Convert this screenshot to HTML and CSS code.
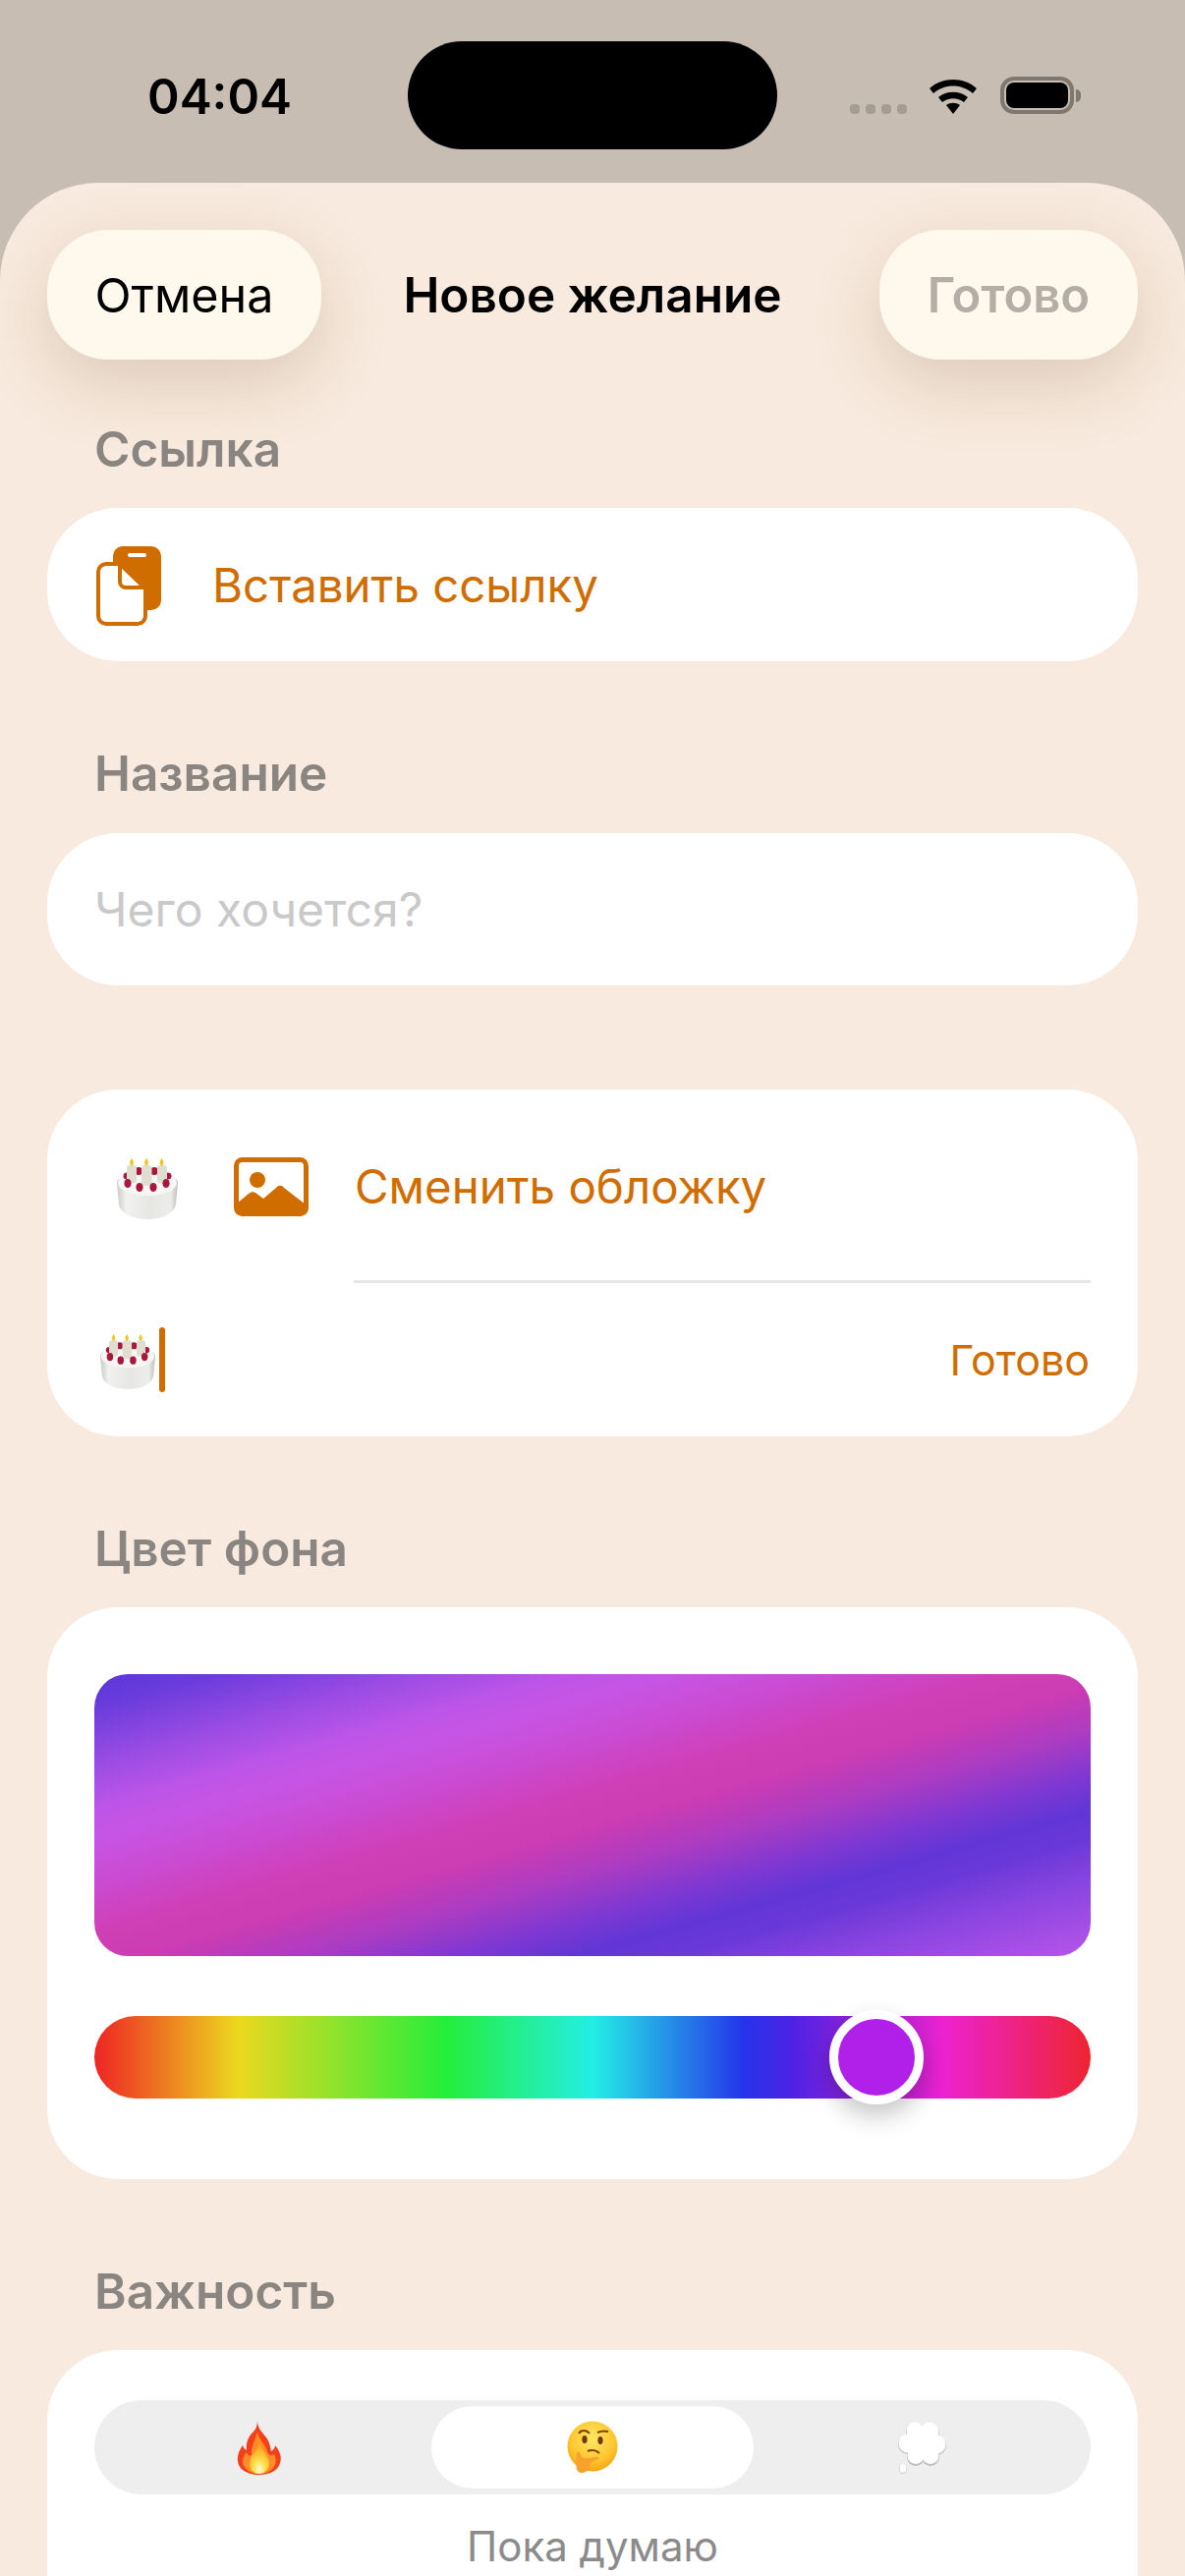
FILE: index.html
```html
<!DOCTYPE html>
<html lang="ru">
<head>
    <meta charset="UTF-8">
    <meta name="viewport" content="width=device-width, initial-scale=1.0">
    <title>Новое желание</title>
    <link rel="stylesheet" href="styles.css">
</head>
<body>
    <svg class="defs" width="0" height="0">
        <defs>
            <linearGradient id="cakeSide" x1="0" y1="0" x2="1" y2="0">
                <stop offset="0" stop-color="#c9c9c6"/>
                <stop offset="0.15" stop-color="#f1f1ef"/>
                <stop offset="0.55" stop-color="#e6e6e3"/>
                <stop offset="0.88" stop-color="#ededeb"/>
                <stop offset="1" stop-color="#bdbdba"/>
            </linearGradient>
            <radialGradient id="faceFill" cx="0.5" cy="0.35" r="0.7">
                <stop offset="0" stop-color="#ffe765"/>
                <stop offset="0.65" stop-color="#fdc52c"/>
                <stop offset="1" stop-color="#f59a0c"/>
            </radialGradient>
            <radialGradient id="fireCore" cx="0.5" cy="0.85" r="0.7">
                <stop offset="0" stop-color="#fffbe0"/>
                <stop offset="0.4" stop-color="#ffe24c"/>
                <stop offset="1" stop-color="#ffa31f"/>
            </radialGradient>
            <symbol id="cake" viewBox="0 0 62 62">
                <path d="M0 25 C0 11 62 11 62 25 L60 47 C58 57 45 62 31 62 C17 62 4 57 2 47 Z" fill="url(#cakeSide)"/>
                <ellipse cx="31" cy="25" rx="30" ry="13" fill="#f6f6f4"/>
                <circle cx="22" cy="13" r="4" fill="#a9183c"/>
                <circle cx="38" cy="13" r="4" fill="#a9183c"/>
                <circle cx="10" cy="18" r="3.5" fill="#a9183c"/>
                <circle cx="52" cy="18" r="3.5" fill="#a9183c"/>
                <rect x="10" y="7" width="10" height="18" rx="3" fill="#e0ded0"/>
                <rect x="25" y="7" width="10.5" height="21" rx="3" fill="#e0ded0"/>
                <rect x="41" y="7" width="10" height="18" rx="3" fill="#e0ded0"/>
                <path d="M15 0 C17 3 18 5 15 8 C12 5 13 3 15 0 Z" fill="#f2c522"/>
                <path d="M30 0 C32 3 33 5 30 8 C27 5 28 3 30 0 Z" fill="#f2c522"/>
                <path d="M45.500 0 C47.500 3 48.500 5 45.500 8 C42.500 5 43.500 3 45.500 0 Z" fill="#f2c522"/>
                <ellipse cx="11" cy="25.500" rx="3.600" ry="4.600" fill="#a9183c"/>
                <ellipse cx="23" cy="29.500" rx="3.600" ry="4.600" fill="#a9183c"/>
                <ellipse cx="37" cy="29.500" rx="3.600" ry="4.600" fill="#a9183c"/>
                <ellipse cx="50" cy="25.500" rx="3.600" ry="4.600" fill="#a9183c"/>
            </symbol>
        </defs>
    </svg>

    <div class="status">
        <div class="time">04:04</div>
        <div class="island"></div>
        <div class="status-icons">
            <div class="dots"><i></i><i></i><i></i><i></i></div>
            <svg class="wifi" width="50" height="37" viewBox="0 0 50 37">
                <path d="M1 11 C14 -1 36 -1 49 11 L45 16 C34 6 16 6 5 16 Z" fill="#000"/>
                <path d="M10 20 C18 13 32 13 40 20 L36 25 C29 20 21 20 14 25 Z" fill="#000"/>
                <path d="M18 28 C22 25 28 25 32 28 L25 37 Z" fill="#000"/>
            </svg>
            <div class="battery"><div class="battery-level"></div></div>
            <div class="battery-nub"></div>
        </div>
    </div>

    <div class="sheet">
        <div class="navbar">
            <button class="nav-btn nav-cancel">Отмена</button>
            <div class="nav-title">Новое желание</div>
            <button class="nav-btn nav-done">Готово</button>
        </div>

        <div class="label label-first">Ссылка</div>
        <div class="card row-card">
            <svg class="paste-icon" width="68" height="82" viewBox="0 0 68 82">
                <path d="M26 1 H56 A10 10 0 0 1 66 11 V56 A10 10 0 0 1 56 66 H17 V11 A10 10 0 0 1 26 1 Z" fill="#d06d00"/>
                <rect x="32" y="8" width="19" height="4" rx="2" fill="#fff"/>
                <path d="M10 19 H24 L50 44 V72 A8 8 0 0 1 42 80 H10 A8 8 0 0 1 2 72 V27 A8 8 0 0 1 10 19 Z" fill="#fff" stroke="#d06d00" stroke-width="4" stroke-linejoin="round"/>
                <path d="M24 19 V37 A6 6 0 0 0 30 43 H50" fill="none" stroke="#d06d00" stroke-width="4"/>
            </svg>
            <span class="accent-text">Вставить ссылку</span>
        </div>

        <div class="label label-name">Название</div>
        <div class="card row-card name-card">
            <span class="placeholder">Чего хочется?</span>
        </div>

        <div class="card cover-card">
            <div class="cover-top">
                <svg class="cake-big"><use href="#cake"/></svg>
                <svg class="image-icon" width="76" height="60" viewBox="0 0 76 60">
                    <rect x="2.500" y="2.500" width="71" height="55" rx="6" fill="none" stroke="#d06d00" stroke-width="5"/>
                    <circle cx="24" cy="23" r="8" fill="#d06d00"/>
                    <path d="M3 47 L15 37 C17 35 20 35 22 36 L30 42 L43 31 C45 28 49 28 51 31 L73 48 V54 A4 4 0 0 1 69 58 H7 A4 4 0 0 1 3 54 Z" fill="#d06d00"/>
                </svg>
                <span class="accent-text">Сменить обложку</span>
            </div>
            <div class="cover-line"></div>
            <div class="cover-bottom">
                <svg class="cake-small"><use href="#cake"/></svg>
                <div class="caret"></div>
                <span class="done-link">Готово</span>
            </div>
        </div>

        <div class="label">Цвет фона</div>
        <div class="card color-card">
            <div class="color-field"></div>
            <div class="hue-bar">
                <div class="hue-thumb"></div>
            </div>
        </div>

        <div class="label">Важность</div>
        <div class="card priority-card">
            <div class="segments">
                <div class="segment segment-fire">
                    <svg width="46" height="56" viewBox="0 0 46 56">
                        <path d="M21 0 C21 8 24 11 30 18 C34 23 34 29 35 32 C37 31 39 29 39 26 C44 32 46 38 44 44 C42 52 33 56 23 56 C11 56 2 51 1 42 C0 35 4 29 6 26 C7 29 8 30 10 31 C9 22 12 17 17 12 C20 9 21 5 21 0 Z" fill="#f2401a"/>
                        <path d="M21 12 C22 20 29 24 31 32 C32 36 35 37 38 35 C41 41 40 47 35 51 C31 54 27 55 23 55 C15 55 7 51 6 43 C6 38 8 35 10 33 C11 36 13 37 15 36 C14 28 19 20 21 12 Z" fill="#ff8a28"/>
                        <path d="M23 23 C25 30 32 36 33 43 C34 50 28 55 23 55 C17 55 12 50 13 43 C14 36 21 31 23 23 Z" fill="url(#fireCore)"/>
                    </svg>
                </div>
                <div class="segment segment-active">
                    <svg width="52" height="54" viewBox="0 0 52 54">
                        <circle cx="26" cy="26" r="25.500" fill="url(#faceFill)"/>
                        <path d="M12 13 C14 9 20 9 23 13" fill="none" stroke="#7a4206" stroke-width="1.800"/>
                        <path d="M31 12 C35 10 38 10 42 11" fill="none" stroke="#7a4206" stroke-width="2"/>
                        <ellipse cx="18" cy="19" rx="2.600" ry="4" fill="#6d3a05"/>
                        <ellipse cx="34" cy="20" rx="2.600" ry="4" fill="#6d3a05"/>
                        <path d="M21 31 C25 29 30 30 33 33" fill="none" stroke="#7a4206" stroke-width="2"/>
                        <path d="M11 31 C14 33 15 37 17 38 C22 39 29 36 32 37 C33 40 26 41 24 43 C24 47 21 53 15 53 C9 53 9 46 10 41 C10 37 9 33 11 31 Z" fill="#f7a12f"/>
                    </svg>
                </div>
                <div class="segment segment-cloud">
                    <svg width="52" height="54" viewBox="0 0 52 54">
                        <g fill="#bdbdbd">
                            <circle cx="18" cy="11" r="9"/><circle cx="33" cy="12" r="10"/><circle cx="11" cy="24" r="10"/>
                            <circle cx="40" cy="25" r="10"/><circle cx="19" cy="37" r="9"/><circle cx="34" cy="37" r="9"/>
                            <ellipse cx="6" cy="49" rx="4" ry="5"/>
                        </g>
                        <g fill="#fff">
                            <circle cx="18" cy="10" r="8.500"/><circle cx="33" cy="11" r="9.500"/><circle cx="11" cy="23" r="9.500"/>
                            <circle cx="40" cy="24" r="9.500"/><circle cx="19" cy="35.500" r="8.500"/><circle cx="34" cy="35.500" r="8.500"/>
                            <circle cx="26" cy="23" r="13"/>
                            <ellipse cx="6" cy="48.500" rx="3.500" ry="4.500"/>
                        </g>
                    </svg>
                </div>
            </div>
            <div class="priority-name">Пока думаю</div>
        </div>
    </div>
</body>
</html>
```

FILE: styles.css
```css
/* Basic reset */
* {
    box-sizing: border-box;
    margin: 0;
    padding: 0;
    font-family: Inter, "Liberation Sans", sans-serif;
}

html, body {
    height: 2622px;
    overflow: hidden;
}

body {
    background-color: #c7bdb3;
}

.defs {
    position: absolute;
}

/* Status bar */
.status {
    height: 186px;
    display: grid;
    grid-template-columns: 415px 376px 1fr;
}

.time {
    padding: 72px 0 0 150px;
    font-size: 49.5px;
    line-height: 52px;
    font-weight: 600;
    color: #000;
}

.island {
    margin-top: 42px;
    height: 110px;
    border-radius: 55px;
    background-color: #000;
}

.status-icons {
    display: flex;
    align-items: flex-start;
    padding: 78px 0 0 74px;
}

.dots {
    display: flex;
    gap: 6px;
    margin-top: 28px;
}

.dots i {
    display: block;
    width: 10px;
    height: 10px;
    border-radius: 4px;
    background-color: #a59c95;
}

.wifi {
    margin: 1px 23px 0 22px;
}

.battery {
    width: 75px;
    height: 38px;
    padding: 2px;
    border: 4px solid #7f7870;
    border-radius: 14px;
}

.battery-level {
    height: 100%;
    border-radius: 8px;
    background-color: #000;
}

.battery-nub {
    width: 5px;
    height: 13px;
    margin: 13px 0 0 2px;
    border-radius: 0 6px 6px 0;
    background-color: #7f7870;
}

/* Sheet */
.sheet {
    height: 2436px;
    padding: 0 48px;
    overflow: hidden;
    border-radius: 100px 100px 0 0;
    background-color: #f8eade;
}

.navbar {
    display: grid;
    grid-template-columns: 1fr auto 1fr;
    align-items: center;
    margin-top: 48px;
    height: 132px;
}

.nav-btn {
    height: 132px;
    border: none;
    border-radius: 62px;
    background-color: #fff8ec;
    font-size: 48.5px;
    box-shadow: 0 24px 70px rgba(125, 90, 55, 0.22);
}

.nav-cancel {
    width: 279px;
    color: #000;
    justify-self: start;
}

.nav-done {
    width: 263px;
    color: #b3aea6;
    font-size: 49px;
    font-weight: 600;
    justify-self: end;
}

.nav-title {
    font-size: 49.5px;
    font-weight: 600;
    color: #000;
}

.label {
    margin: 86px 0 32px 48px;
    font-size: 49.5px;
    line-height: 56px;
    font-weight: 600;
    color: #8b8582;
}

.label-first {
    margin-top: 63px;
}

.label-name {
    margin-bottom: 33px;
}

.card {
    border-radius: 72px;
    background-color: #fff;
}

.row-card {
    display: flex;
    align-items: center;
    height: 156px;
    padding-left: 50px;
}

.paste-icon {
    margin: 1px 50px 0 0;
}

.accent-text {
    font-size: 47.4px;
    color: #d06d00;
}

.name-card {
    height: 155px;
    padding-left: 48px;
}

.placeholder {
    font-size: 48px;
    color: #c9c9c9;
}

/* Cover card */
.cover-card {
    height: 353px;
    margin-top: 106px;
}

.cover-top {
    display: flex;
    align-items: center;
    height: 194px;
    padding: 3px 0 0 71px;
}

.cake-big {
    width: 62px;
    height: 62px;
    margin-top: 4px;
}

.image-icon {
    margin-left: 57px;
}

.cover-top .accent-text {
    margin-left: 47px;
}

.cover-line {
    height: 3px;
    margin: 0 48px 0 312px;
    background-color: #e5e5e5;
}

.cover-bottom {
    display: flex;
    align-items: center;
    height: 156px;
    padding: 0 49px 0 54px;
}

.cake-small {
    width: 56px;
    height: 56px;
    margin-top: 4px;
}

.caret {
    width: 6px;
    height: 66px;
    margin-left: 4px;
    border-radius: 3px;
    background-color: #d06d00;
}

.done-link {
    margin-left: auto;
    font-size: 43px;
    color: #d06d00;
}

/* Colour picker */
.color-card {
    height: 582px;
    padding: 68px 48px 0;
}

.color-field {
    height: 287px;
    border-radius: 34px;
    background: linear-gradient(to bottom right,
        #5a37d8 0%, #6a3cdc 6%, #9a4ce3 16%, #bd55e8 24%, #c655e4 29%,
        #ca4bd2 37%, #cf3fb6 46%, #cc3cb2 52%, #ad3cc2 60%,
        #7e38d2 68%, #6136d6 74%, #6a38d8 79%, #8a45e0 87%, #b855ea 100%);
}

.hue-bar {
    position: relative;
    height: 84px;
    margin-top: 61px;
    border-radius: 42px;
    background: linear-gradient(to right, #ee2424 0%, #ecd81f 14.4%, #24ee3a 35.3%, #24eee4 50%, #2534ea 65.2%, #4d22e4 70%, #ec22d0 85.3%, #ee2430 100%);
}

.hue-thumb {
    position: absolute;
    left: 748px;
    top: -6px;
    width: 96px;
    height: 96px;
    border: 9px solid #fff;
    border-radius: 50%;
    background-color: #b020e8;
    box-shadow: 0 12px 24px rgba(0, 0, 0, 0.22);
}

/* Importance */
.priority-card {
    height: 400px;
    padding: 51px 48px 0;
}

.segments {
    display: grid;
    grid-template-columns: repeat(3, 1fr);
    height: 96px;
    padding: 6px;
    border-radius: 48px;
    background-color: #eeeeee;
}

.segment {
    display: flex;
    align-items: center;
    justify-content: center;
}

.segment-fire {
    padding-right: 10px;
}

.segment-cloud {
    padding-left: 4px;
}

.segment-active {
    margin: 0 3px;
    border-radius: 42px;
    background-color: #fff;
}

.priority-name {
    margin-top: 27px;
    font-size: 42px;
    line-height: 52px;
    text-align: center;
    color: #8b8b8b;
}
```
